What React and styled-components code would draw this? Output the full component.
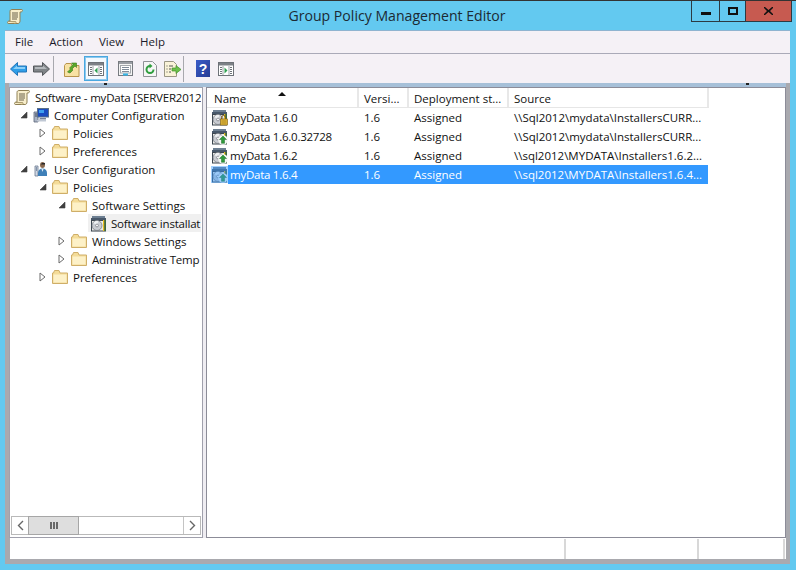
import React from "react";
import styled, { createGlobalStyle } from "styled-components";

const Global = createGlobalStyle`
  html, body { margin: 0; padding: 0; background: #63c9f0; overflow: hidden; }
  body { font-family: "Open Sans", "Noto Sans", "Liberation Sans", sans-serif; font-size: 11.5px; color: #111; }
  svg { display: block; flex: none; }
`;

const Win = styled.div`
  width: 796px; height: 570px; display: flex; flex-direction: column;
  box-sizing: border-box; border-top: 1px solid #333; background: #63c9f0; position: relative;
`;
const TitleBar = styled.div`
  height: 29px; flex: none; display: grid; grid-template-columns: 1fr auto 1fr; align-items: start;
`;
const TitleIconSlot = styled.div` padding: 7px 0 0 7px; `;
const Title = styled.div`
  font-size: 14.1px; line-height: 29px; color: #1c2a33; padding-right: 2px;
`;
const Controls = styled.div` display: flex; justify-content: flex-end; padding-right: 4px; `;
const Ctl = styled.div`
  width: ${p => p.$w}px; height: 21px; box-sizing: border-box; display: flex; align-items: center; justify-content: center;
  border: 1px solid #2c3a42; border-top: 0; margin-left: -1px;
  background: ${p => p.$close ? "#c75a50" : "transparent"};
`;
const Frame = styled.div`
  flex: 1; min-height: 0; display: flex; flex-direction: column; margin: 0 6px 6px 5px;
`;
const MenuBar = styled.div`
  flex: none; display: flex; align-items: center; padding: 0 0 2px 10px; gap: 16px; box-sizing: border-box;
  background: #f5f1f6; border-top: 1px solid #8fb4d0; height: 24px; border-bottom: 1px solid #aaaab8;
  color: #1a1a2a;
`;
const ToolBar = styled.div`
  height: 29px; flex: none; display: flex; align-items: center; padding-left: 2px; background: #f5f1f6; box-sizing: border-box;
`;
const Tool = styled.div`
  width: ${p => p.$w || 23}px; height: 25px; margin-left: ${p => p.$ml || 0}px; box-sizing: border-box;
  display: flex; align-items: center; justify-content: center;
  ${p => p.$on ? "border: 1px solid #4aa8e0; outline: 1px solid #8cc8ee; outline-offset: -2px; background: #f4f9fd;" : ""}
`;
const ToolSep = styled.div`
  width: 1px; height: 26px; background: #a8a8ae; margin: 0 0 0 ${p => p.$ml || 0}px;
`;
const Content = styled.div`
  flex: 1; min-height: 0; display: flex; flex-direction: column; box-sizing: border-box;
  padding: 4px 4px 5px 4px;
  background: linear-gradient(#a6c0d8, #a6c0d8) 4px 0 / calc(100% - 8px) 4px no-repeat, #a9a9ae;
`;
const Panes = styled.div` flex: 1; min-height: 0; display: flex; `;
const TreePane = styled.div`
  width: 194px; flex: none; box-sizing: border-box; display: flex; flex-direction: column; background: #fff;
  border: 1px solid #a0a0ac;
`;
const Splitter = styled.div` width: 3px; flex: none; background: #efedf2; `;
const ListPane = styled.div`
  flex: 1; min-width: 0; box-sizing: border-box; background: #fff; border: 1px solid #8c8c98;
`;
const Tree = styled.div` flex: 1; min-height: 0; overflow: hidden; `;
const TRow = styled.div`
  height: 18px; display: flex; align-items: center; padding-left: ${p => 4 + 19 * p.$level}px; white-space: nowrap;
`;
const Expander = styled.div`
  width: 19px; margin-left: -19px; flex: none; display: flex; justify-content: center;
`;
const Item = styled.div`
  flex: 1; min-width: 0; height: 18px; display: flex; align-items: center; overflow: hidden; margin-right: 1px;
  margin-left: -2px; padding-left: 2px;
  background: ${p => p.$sel ? "#f0f0f0" : "transparent"};
`;
const ItemIcon = styled.div` width: 17px; margin-right: 4px; flex: none; `;
const ItemText = styled.span`
  letter-spacing: ${p => p.$tight ? "-.2px" : "0"};
`;
const ScrollBar = styled.div`
  height: 17px; flex: none; display: flex; margin: 0 1px 2px 1px; border: 1px solid #b9b9b9; background: #fff;
`;
const ScrollBtn = styled.div`
  width: 16px; display: flex; align-items: center; justify-content: center; flex: none;
`;
const ScrollThumb = styled.div`
  width: 51px; flex: none; box-sizing: border-box; background: #dedede; border: 1px solid #a6a6a6; margin: -1px 0;
  display: flex; align-items: center; justify-content: center; gap: 1px;
`;
const Grip = styled.i` width: 2px; height: 7px; background: #6a6a6a; `;
const ScrollTrack = styled.div` flex: 1; border-right: 1px solid #c4c4c4; `;
const Header = styled.div`
  height: 20px; display: grid; grid-template-columns: 152px 50px 100px 200px; width: 502px; position: relative;
  box-sizing: border-box; border-bottom: 1px solid #e6e6e6;
`;
const HCell = styled.div`
  padding-left: ${p => p.$pl || 5}px; line-height: 22px; box-sizing: border-box; border-right: 2px solid #e8e8e8; white-space: nowrap; overflow: hidden;
`;
const SortArrow = styled.div`
  position: absolute; left: 71px; top: 4px; width: 0; height: 0;
  border-left: 4px solid transparent; border-right: 4px solid transparent; border-bottom: 4px solid #111;
`;
const LRow = styled.div` height: 19px; display: flex; `;
const LIcon = styled.div` width: 21px; flex: none; padding-left: 4px; box-sizing: border-box; display: flex; align-items: center; `;
const LBody = styled.div`
  width: 480px; display: grid; grid-template-columns: 130px 50px 100px 200px; align-items: center;
  background: ${p => p.$sel ? "#3399ff" : "transparent"}; color: ${p => p.$sel ? "#fff" : "inherit"};
`;
const LCell = styled.div`
  padding-left: ${p => p.$pl || 6}px; white-space: nowrap; overflow: hidden;
  letter-spacing: ${p => p.$tight ? "-.25px" : "0"};
`;
const StatusBar = styled.div`
  height: 21px; flex: none; background: #fff; display: grid; grid-template-columns: 556px 133px 86px 1px; margin: 0 0 0 1px;
`;
const StatusCell = styled.div` border-right: 2px solid #d8d8d8; margin-top: 1px; `;
const Tick = styled.div`
  position: absolute; top: 82px; left: ${p => p.$x}px; width: 3px; height: 2px; background: #222;
`;

const Scroll = () => (
  <svg width="16" height="17" viewBox="0 0 16 17">
    <path d="M5 1.500h9c1.500 0 2 .8 1.500 1.500-.4.7-1 1-2.500 1v9c0 1.500-.8 2.500-2 2.500H2c-1.500 0-2-.8-1.500-1.500.4-.7 1-1 2.500-1V3.500C3 2.200 3.800 1.500 5 1.500z" fill="#f8eecb" stroke="#8f8055" />
    <path d="M1.500 13.500h7c.8 0 .8 1.500 0 2" fill="#e8d8a4" stroke="#8f8055" strokeWidth=".7" />
    <path d="M5 5h6M5 7h6M5 9h6M5 11h5" stroke="#6a634c" />
  </svg>
);
const Folder = () => (
  <svg width="16" height="14" viewBox="0 0 16 14">
    <path d="M.5 3v10.500h15V3H8L7 .5H2.500L1.500 3z" fill="#f4dc98" stroke="#cfae68" />
    <path d="M1.500 4.500h13v8h-13z" fill="#fdf1c8" />
  </svg>
);
const Computer = () => (
  <svg width="16" height="16" viewBox="0 0 16 16">
    <path d="M1 5h4v10H1z" fill="#aab4c4" stroke="#5a6478" strokeWidth=".8" />
    <path d="M2 7h2M2 9h2" stroke="#3a4458" />
    <rect x="4.500" y="1.500" width="11" height="8.500" fill="#1a4cc0" stroke="#5a7088" />
    <path d="M6 3h5v3H6z" fill="#3fa0ee" />
    <path d="M7 11h6v1.500H6z" fill="#7a8598" />
    <path d="M4 13h9v1.500H4z" fill="#c0c8d4" />
  </svg>
);
const User = () => (
  <svg width="16" height="16" viewBox="0 0 16 16">
    <path d="M2 5h3v10H2z" fill="#d0d8e4" stroke="#6a7a90" strokeWidth=".8" />
    <path d="M3 7h1M3 9h1" stroke="#36506e" />
    <ellipse cx="9.500" cy="4" rx="2.500" ry="3" fill="#8a6a50" />
    <path d="M9 2h3v1.500H8z" fill="#2a2a2a" />
    <path d="M5 15v-3c0-3 2-4.500 4.500-4.500s4.500 1.500 4.500 4.500v3z" fill="#3f80b8" />
    <path d="M8.500 8l1 3 1-3z" fill="#e6eef6" />
  </svg>
);
const Package = ({ badge, tint }) => (
  <svg width="17" height="17" viewBox="0 0 17 17">
    <rect x="2" y="1" width="13" height="2" fill="#6d7f92" />
    <rect x="1" y="3" width="15" height="2" fill="#48586a" />
    <rect x="1" y="5" width="15" height="11.500" fill="#3c4650" />
    <rect x="2" y="6" width="11" height="9.500" fill="#eeeeea" />
    <circle cx="7" cy="10.500" r="5" fill="#c9ccd2" stroke="#6c7078" strokeWidth=".7" />
    <path d="M7 10.500L3.500 8a4.300 4.300 0 0 1 5-2z" fill="#eef0f2" />
    <circle cx="7" cy="10.500" r="1.400" fill="#fff" stroke="#5c6068" strokeWidth=".6" />
    <rect x="13" y="5" width="1.500" height="11" fill="#e6c020" />
    <rect x="14.500" y="5" width="1.500" height="11" fill="#3c6a40" />
    {badge === "arrow" && (
      <>
        <circle cx="12" cy="12" r="4.800" fill="#f4f6f4" />
        <path d="M12 8l3.500 3.500h-2v3.800h-3v-3.800h-2z" fill="#2e9a3a" stroke="#1c6a28" strokeWidth=".5" />
      </>
    )}
    {badge === "lock" && (
      <>
        <path d="M10.500 10V8.500a2 2 0 0 1 4 0V10" fill="none" stroke="#7a5c18" />
        <rect x="9.500" y="10" width="7" height="6" fill="#e2b83c" stroke="#8a6a1c" strokeWidth=".7" />
        <path d="M10.500 12h5M10.500 14h5" stroke="#b08a20" />
      </>
    )}
    {tint && <rect x="0" y="0" width="17" height="17" fill="#3399ff" opacity=".45" />}
  </svg>
);
const ExpOpen = () => (
  <svg width="8" height="8" viewBox="0 0 8 8"><path d="M7 1v6H1z" fill="#404040" stroke="#404040" strokeWidth=".6" /></svg>
);
const ExpClosed = () => (
  <svg width="7" height="10" viewBox="0 0 7 10"><path d="M1 1l5 4-5 4z" fill="#fff" stroke="#6a6a6a" /></svg>
);

const Back = () => (
  <svg width="17" height="14" viewBox="0 0 17 14">
    <path d="M.5 7L7.500.5v3.500h9v6h-9v3.500z" fill="#2f9ee8" stroke="#2274b8" />
    <path d="M3 7l4-3.500V5h8v2z" fill="#8cd0f8" />
  </svg>
);
const Fwd = () => (
  <svg width="17" height="14" viewBox="0 0 17 14">
    <path d="M16.500 7L9.500.5v3.500h-9v6h9v3.500z" fill="#808488" stroke="#55585c" />
    <path d="M14 7l-4-3.500V5H2v2z" fill="#b4b8bc" />
  </svg>
);
const UpFolder = () => (
  <svg width="16" height="16" viewBox="0 0 16 16">
    <path d="M.5 4.500v11h14.500V4.500h-7L7 2.500H2z" fill="#f8e2a4" stroke="#b8944c" />
    <path d="M3.500 11l3-3-1-1 3.500-3.500-1.500-1.500h5v4.500L11 5 8 8l1 1-3 3z" fill="#5aa82a" stroke="#3a7a1c" strokeWidth=".6" />
  </svg>
);
const PaneToggle = ({ dir }) => (
  <svg width="16" height="14" viewBox="0 0 16 14">
    <rect x=".5" y=".5" width="15" height="13" fill="#fff" stroke="#6e7278" />
    <rect x="1" y="1" width="14" height="2.500" fill="#7c8086" />
    <path d="M2 5.500h2M2 7.500h2M2 9.500h2M2 11.500h2M12 5.500h2M12 7.500h2M12 9.500h2M12 11.500h2" stroke="#6e7278" />
    <path d="M5 4v9M11 4v9" stroke="#a0a4aa" />
    {dir === "left" ? <path d="M9.500 5.500v6L6.500 8.500z" fill="#2fa050" /> : <path d="M6.500 5.500v6l3-3z" fill="#2fa050" />}
  </svg>
);
const Props = () => (
  <svg width="15" height="15" viewBox="0 0 15 15">
    <rect x=".5" y=".5" width="14" height="14" fill="#f4f4f4" stroke="#777b80" />
    <rect x="1" y="1" width="13" height="2" fill="#9a9ea4" />
    <rect x="2.500" y="4.500" width="10" height="7.500" fill="#fff" stroke="#a4a8ac" />
    <path d="M4 6.500h7M4 8.500h7M4 10.500h7" stroke="#7e8a98" />
    <path d="M5 13.500h5" stroke="#36b6e8" strokeWidth="2" />
  </svg>
);
const Refresh = () => (
  <svg width="14" height="16" viewBox="0 0 14 16">
    <path d="M.5.500h9l4 4v11H.5z" fill="#f6f6f6" stroke="#8f9296" />
    <path d="M10.500 8.500A3.500 3.500 0 1 1 7 5" fill="none" stroke="#2f9e3e" strokeWidth="2" />
    <path d="M6.500 2.500l3 2.500-3 2.500z" fill="#2f9e3e" />
  </svg>
);
const ExportList = () => (
  <svg width="18" height="16" viewBox="0 0 18 16">
    <path d="M.5.500h9l3 3v12H.5z" fill="#faf3d8" stroke="#9a9684" />
    <path d="M2.500 5h1M5 5h4M2.500 8h1M5 8h2M2.500 11h1M5 11h2" stroke="#555" />
    <path d="M8 7h4V4.500l5 4-5 4V10H8z" fill="#6cc04a" stroke="#46902c" strokeWidth=".7" />
  </svg>
);
const Help = () => (
  <svg width="14" height="17" viewBox="0 0 14 17">
    <defs>
      <linearGradient id="hb" x1="0" y1="0" x2="1" y2="1"><stop offset="0" stopColor="#3a5cc8" /><stop offset="1" stopColor="#263c94" /></linearGradient>
    </defs>
    <rect width="14" height="17" fill="url(#hb)" />
    <text x="7" y="13.500" textAnchor="middle" fontFamily="Liberation Sans, sans-serif" fontWeight="700" fontSize="14" fill="#fff">?</text>
  </svg>
);

const tree = [
  { l: 0, t: "Software - myData [SERVER2012", i: "scroll", tight: true },
  { l: 1, t: "Computer Configuration", i: "computer", e: "open" },
  { l: 2, t: "Policies", i: "folder", e: "closed" },
  { l: 2, t: "Preferences", i: "folder", e: "closed" },
  { l: 1, t: "User Configuration", i: "user", e: "open" },
  { l: 2, t: "Policies", i: "folder", e: "open" },
  { l: 3, t: "Software Settings", i: "folder", e: "open" },
  { l: 4, t: "Software installat", i: "package", sel: true, tight: true },
  { l: 3, t: "Windows Settings", i: "folder", e: "closed" },
  { l: 3, t: "Administrative Temp", i: "folder", e: "closed", tight: true },
  { l: 2, t: "Preferences", i: "folder", e: "closed" },
];
const treeIcons = {
  scroll: <Scroll />, computer: <Computer />, user: <User />, folder: <Folder />, package: <Package />,
};
const rows = [
  { n: "myData 1.6.0", s: "\\\\Sql2012\\mydata\\InstallersCURR...", b: "lock" },
  { n: "myData 1.6.0.32728", s: "\\\\Sql2012\\mydata\\InstallersCURR...", b: "arrow" },
  { n: "myData 1.6.2", s: "\\\\sql2012\\MYDATA\\Installers1.6.2...", b: "arrow" },
  { n: "myData 1.6.4", s: "\\\\sql2012\\MYDATA\\Installers1.6.4...", b: "arrow", sel: true },
];

export default function App() {
  return (
    <Win>
      <Global />
      <TitleBar>
        <TitleIconSlot><Scroll /></TitleIconSlot>
        <Title>Group Policy Management Editor</Title>
        <Controls>
          <Ctl $w={29}>
            <svg width="10" height="10" viewBox="0 0 10 10"><rect y="6" width="10" height="3" fill="#111" /></svg>
          </Ctl>
          <Ctl $w={27}>
            <svg width="10" height="8" viewBox="0 0 10 8"><rect x="1" y="1" width="8" height="6" fill="none" stroke="#111" strokeWidth="2" /></svg>
          </Ctl>
          <Ctl $w={47} $close>
            <svg width="9" height="8" viewBox="0 0 9 8"><path d="M1 0l3.500 3L8 0h1v1L6 4l3 3v1H8L4.500 5 1 8H0V7l3-3-3-3V0z" fill="#111" /></svg>
          </Ctl>
        </Controls>
      </TitleBar>
      <Frame>
        <MenuBar>
          <span>File</span><span>Action</span><span>View</span><span>Help</span>
        </MenuBar>
        <ToolBar>
          <Tool><Back /></Tool>
          <Tool><Fwd /></Tool>
          <ToolSep />
          <Tool $w={24} $ml={6}><UpFolder /></Tool>
          <Tool $w={24} $on><PaneToggle dir="left" /></Tool>
          <Tool $ml={6}><Props /></Tool>
          <Tool $w={25}><Refresh /></Tool>
          <Tool $w={21}><ExportList /></Tool>
          <ToolSep />
          <Tool $ml={7}><Help /></Tool>
          <Tool $w={24}><PaneToggle dir="right" /></Tool>
        </ToolBar>
        <Content>
          <Panes>
            <TreePane>
              <Tree>
                {tree.map((r, i) => (
                  <TRow key={i} $level={r.l}>
                    {r.e && <Expander>{r.e === "open" ? <ExpOpen /> : <ExpClosed />}</Expander>}
                    <Item $sel={r.sel}>
                      <ItemIcon>{treeIcons[r.i]}</ItemIcon>
                      <ItemText $tight={r.tight}>{r.t}</ItemText>
                    </Item>
                  </TRow>
                ))}
              </Tree>
              <ScrollBar>
                <ScrollBtn>
                  <svg width="7" height="11" viewBox="0 0 7 11"><path d="M6 1L1.500 5.500 6 10" fill="none" stroke="#666" strokeWidth="1.400" /></svg>
                </ScrollBtn>
                <ScrollThumb><Grip /><Grip /><Grip /></ScrollThumb>
                <ScrollTrack />
                <ScrollBtn>
                  <svg width="7" height="11" viewBox="0 0 7 11"><path d="M1 1l4.500 4.500L1 10" fill="none" stroke="#666" strokeWidth="1.400" /></svg>
                </ScrollBtn>
              </ScrollBar>
            </TreePane>
            <Splitter />
            <ListPane>
              <Header>
                <HCell $pl={7}>Name</HCell>
                <HCell>Versi...</HCell>
                <HCell>Deployment st...</HCell>
                <HCell>Source</HCell>
                <SortArrow />
              </Header>
              {rows.map((r) => (
                <LRow key={r.n}>
                  <LIcon><Package badge={r.b} tint={r.sel} /></LIcon>
                  <LBody $sel={r.sel}>
                    <LCell $pl={2} $tight>{r.n}</LCell>
                    <LCell>1.6</LCell>
                    <LCell>Assigned</LCell>
                    <LCell>{r.s}</LCell>
                  </LBody>
                </LRow>
              ))}
            </ListPane>
          </Panes>
          <StatusBar>
            <StatusCell /><StatusCell /><StatusCell />
          </StatusBar>
        </Content>
      </Frame>
      <Tick $x={104} />
      <Tick $x={746} />
    </Win>
  );
}
